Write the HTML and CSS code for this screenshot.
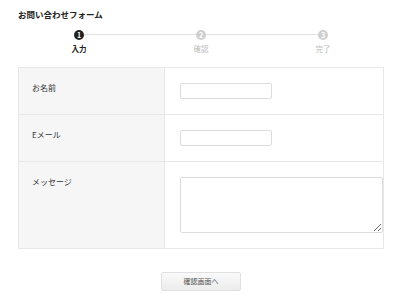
FILE: index.html
```html
<!DOCTYPE html>
<html lang="ja">
<head>
<meta charset="UTF-8">
<meta name="viewport" content="width=device-width, initial-scale=1.0">
<title>お問い合わせフォーム</title>
<link rel="stylesheet" href="styles.css">
</head>
<body>
    <h1 class="form-title">お問い合わせフォーム</h1>

    <ol class="steps">
        <li class="step active"><span class="step-num">1</span><span class="step-label">入力</span></li>
        <li class="step"><span class="step-num">2</span><span class="step-label">確認</span></li>
        <li class="step"><span class="step-num">3</span><span class="step-label">完了</span></li>
    </ol>

    <form class="contact-form" onsubmit="return false;">
        <table class="form-table">
            <tr>
                <th>お名前</th>
                <td><input type="text" class="field"></td>
            </tr>
            <tr>
                <th>Eメール</th>
                <td><input type="email" class="field"></td>
            </tr>
            <tr class="row-message">
                <th>メッセージ</th>
                <td><textarea class="field-area"></textarea></td>
            </tr>
        </table>
        <div class="form-actions">
            <button type="submit" class="btn-confirm">確認画面へ</button>
        </div>
    </form>
</body>
</html>
```

FILE: styles.css
```css
body {
    margin: 0;
    padding: 0 18px;
    font-family: "Noto Sans CJK JP", "Noto Sans", sans-serif;
    color: #333;
    background-color: #fff;
}
.form-title {
    margin: 0;
    padding-top: 8px;
    font-size: 8.5px;
    line-height: 12px;
    font-weight: bold;
    color: #222;
}
.steps {
    display: flex;
    list-style: none;
    margin: 10px 0 0;
    padding: 0;
}
.step {
    flex: 1;
    display: flex;
    flex-direction: column;
    align-items: center;
    position: relative;
}
/* connector line to the next step */
.step:not(:last-child)::after {
    content: "";
    position: absolute;
    top: 4px;
    left: 50%;
    width: 100%;
    height: 1px;
    background-color: #e2e2e2;
}
.step-num {
    position: relative;
    z-index: 1;
    width: 10px;
    height: 10px;
    border-radius: 50%;
    background-color: #cfcfcf;
    color: #fff;
    font-size: 7px;
    line-height: 10px;
    font-weight: bold;
    text-align: center;
}
.step-label {
    margin-top: 4px;
    font-size: 7.5px;
    line-height: 10px;
    color: #bdbdbd;
}
.step.active .step-num {
    background-color: #222;
}
.step.active .step-label {
    color: #222;
    font-weight: bold;
}
.contact-form {
    margin-top: 13px;
}
.form-table {
    width: 366px;
    border-collapse: collapse;
}
.form-table th,
.form-table td {
    border: 1px solid #e8e8e8;
    vertical-align: top;
}
.form-table th {
    width: 120px;
    padding: 14px 13px 15px;
    background-color: #f6f6f6;
    font-size: 8px;
    line-height: 12px;
    font-weight: normal;
    text-align: left;
    color: #333;
}
.form-table td {
    padding: 15px 0 15px 15px;
}
.field {
    display: block;
    box-sizing: border-box;
    width: 92px;
    height: 16px;
    margin: 0;
    border: 1px solid #dcdcdc;
    border-radius: 2px;
    font-size: 8px;
}
.field-area {
    display: block;
    box-sizing: border-box;
    width: 203px;
    height: 56px;
    margin: 0;
    border: 1px solid #dcdcdc;
    border-radius: 2px;
    font-size: 8px;
}
.form-actions {
    margin-top: 16px;
    text-align: center;
}
.btn-confirm {
    width: 80px;
    height: 19px;
    padding: 0;
    border: 1px solid #e0e0e0;
    border-radius: 2px;
    background: linear-gradient(#fafafa, #ececec);
    font-family: inherit;
    font-size: 7px;
    color: #555;
    cursor: pointer;
}
```
